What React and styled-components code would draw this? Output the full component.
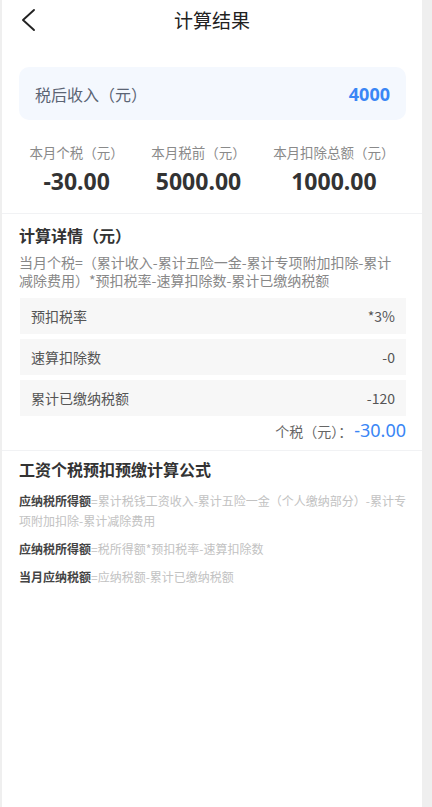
import React from "react";
import styled, { createGlobalStyle } from "styled-components";

const GlobalStyle = createGlobalStyle`
  html, body {
    margin: 0;
    padding: 0;
    background: #efefef;
  }
  body {
    font-family: "Noto Sans CJK SC", "Noto Sans", sans-serif;
  }
  * { box-sizing: border-box; }
`;

const Page = styled.main`
  margin-left: 2px;
  width: 420px;
  min-height: 100vh;
  background: #ffffff;
  color: #333;
`;

const Header = styled.header`
  position: relative;
  height: 40px;
  display: flex;
  align-items: center;
  justify-content: center;
`;

const BackButton = styled.button`
  position: absolute;
  left: 14px;
  top: 6px;
  width: 28px;
  height: 28px;
  padding: 0;
  border: none;
  background: none;
  display: flex;
  align-items: center;
  justify-content: center;
`;

const Title = styled.h1`
  margin: 0;
  font-size: 19px;
  font-weight: 400;
  line-height: 40px;
  color: #222;
`;

const Block = styled.section`
  padding: ${(p) => p.$pad || "0 16px"};
  border-bottom: ${(p) => (p.$divider ? "1px solid #f1f2f4" : "none")};
`;

const IncomeCard = styled.div`
  margin: 27px 0 0 1px;
  height: 53px;
  border-radius: 10px;
  background: #f4f8fe;
  display: flex;
  align-items: center;
  justify-content: space-between;
  padding: 0 16px 0 16px;
`;

const IncomeLabel = styled.span`
  font-size: 16px;
  color: #5b6474;
`;

const IncomeValue = styled.span`
  font-family: "Noto Sans", sans-serif;
  font-size: 18px;
  font-weight: 700;
  color: #3a86f5;
`;

const Stats = styled.div`
  display: flex;
  justify-content: space-evenly;
  margin: 22px -16px 0;
`;

const Stat = styled.div`
  display: flex;
  flex-direction: column;
  align-items: center;
  gap: 4px;
`;

const StatLabel = styled.span`
  font-size: 13.5px;
  line-height: 20px;
  color: #8a8a8a;
`;

const StatValue = styled.span`
  font-family: "Noto Sans", sans-serif;
  font-size: 23px;
  line-height: 30px;
  font-weight: 700;
  color: #333;
`;

const SectionTitle = styled.h2`
  margin: 0;
  font-size: 16px;
  line-height: 22px;
  font-weight: 700;
  color: #333;
`;

const Formula = styled.p`
  margin: 7px 0 0;
  padding-right: 6px;
  font-size: 14px;
  line-height: 18px;
  color: #888;
`;

const Rows = styled.div`
  margin: 9px 0 0 1px;
  display: flex;
  flex-direction: column;
  gap: 5px;
`;

const Row = styled.div`
  height: 36px;
  background: #f7f7f7;
  display: flex;
  align-items: center;
  justify-content: space-between;
  padding: 0 11px;
  font-size: 14px;
  color: #555;
`;

const Total = styled.div`
  margin-top: 2px;
  display: flex;
  justify-content: flex-end;
  align-items: baseline;
  line-height: 24px;
`;

const TotalLabel = styled.span`
  font-size: 14px;
  color: #666;
  margin-right: 2px;
`;

const TotalValue = styled.span`
  font-family: "Noto Sans", sans-serif;
  font-size: 18px;
  color: #3a86f5;
`;

const RuleList = styled.div`
  margin-top: 11px;
  display: flex;
  flex-direction: column;
  gap: 8px;
`;

const Rule = styled.p`
  margin: 0;
  font-size: 12px;
  line-height: 20px;
  color: #c2c2c2;
`;

const RuleName = styled.b`
  font-weight: 700;
  color: #444;
`;

const stats = [
  { label: "本月个税（元）", value: "-30.00" },
  { label: "本月税前（元）", value: "5000.00" },
  { label: "本月扣除总额（元）", value: "1000.00" },
];

const rows = [
  { label: "预扣税率", value: "*3%" },
  { label: "速算扣除数", value: "-0" },
  { label: "累计已缴纳税额", value: "-120" },
];

const rules = [
  {
    name: "应纳税所得额",
    text: "=累计税钱工资收入-累计五险一金（个人缴纳部分）-累计专项附加扣除-累计减除费用",
  },
  { name: "应纳税所得额", text: "=税所得额*预扣税率-速算扣除数" },
  { name: "当月应纳税额", text: "=应纳税额-累计已缴纳税额" },
];

const App = () => (
  <>
    <GlobalStyle />
    <Page>
      <Header>
        <BackButton aria-label="返回">
          <svg width="28" height="28" viewBox="0 0 28 28" fill="none">
            <path
              d="M18 4 L7 14 L18 24"
              stroke="#222"
              strokeWidth="1.9"
              strokeLinecap="round"
              strokeLinejoin="round"
            />
          </svg>
        </BackButton>
        <Title>计算结果</Title>
      </Header>

      <Block $divider $pad="0 16px 17px">
        <IncomeCard>
          <IncomeLabel>税后收入（元）</IncomeLabel>
          <IncomeValue>4000</IncomeValue>
        </IncomeCard>
        <Stats>
          {stats.map((s) => (
            <Stat key={s.label}>
              <StatLabel>{s.label}</StatLabel>
              <StatValue>{s.value}</StatValue>
            </Stat>
          ))}
        </Stats>
      </Block>

      <Block $divider $pad="10px 16px 7px 17px">
        <SectionTitle>计算详情（元）</SectionTitle>
        <Formula>
          当月个税=（累计收入-累计五险一金-累计专项附加扣除-累计减除费用）*预扣税率-速算扣除数-累计已缴纳税额
        </Formula>
        <Rows>
          {rows.map((r) => (
            <Row key={r.label}>
              <span>{r.label}</span>
              <span>{r.value}</span>
            </Row>
          ))}
        </Rows>
        <Total>
          <TotalLabel>个税（元）：</TotalLabel>
          <TotalValue>-30.00</TotalValue>
        </Total>
      </Block>

      <Block $pad="7px 16px 0 17px">
        <SectionTitle>工资个税预扣预缴计算公式</SectionTitle>
        <RuleList>
          {rules.map((r, i) => (
            <Rule key={i}>
              <RuleName>{r.name}</RuleName>
              {r.text}
            </Rule>
          ))}
        </RuleList>
      </Block>
    </Page>
  </>
);

export default App;
